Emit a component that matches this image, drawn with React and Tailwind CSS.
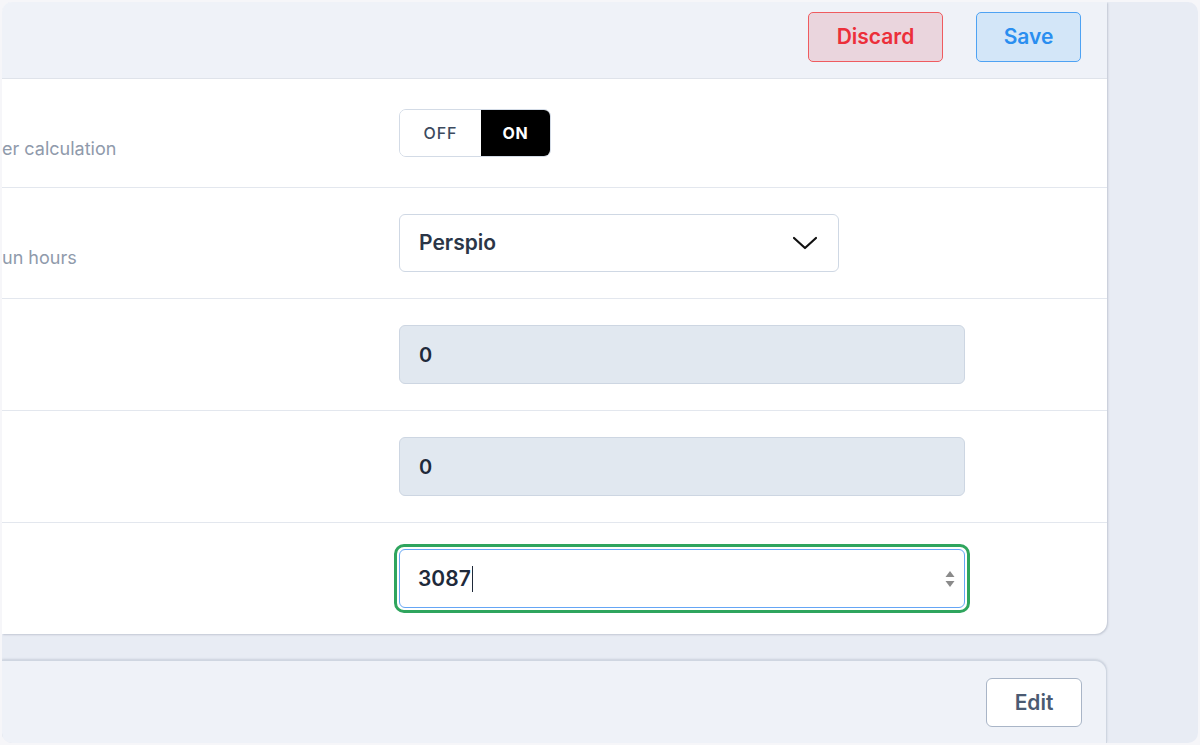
import React from "react";

const font = { fontFamily: "Inter, 'Noto Sans', sans-serif" };

function Row({ children, desc, last, height }) {
  return (
    <div className={`grid grid-cols-[397px_1fr] ${height} ${last ? "" : "border-b border-[#e3e7ee]"}`}>
      <div className="overflow-hidden whitespace-nowrap">
        {desc ? (
          <div className="pt-[58px] text-[18px] leading-6 text-[#8f9aab]">{desc}</div>
        ) : null}
      </div>
      <div className="flex items-center">{children}</div>
    </div>
  );
}

function Toggle() {
  return (
    <div className="flex h-[48px] w-[152px] overflow-hidden rounded-[7px] border border-[#d3dbe6]">
      <div className="flex w-[81px] items-center justify-center bg-white text-[16px] font-medium tracking-[0.06em] text-[#3c4a5e]">
        OFF
      </div>
      <div className="flex flex-1 items-center justify-center bg-black text-[16px] font-bold tracking-[0.04em] text-white">
        ON
      </div>
    </div>
  );
}

function Chevron() {
  return (
    <svg width="26" height="16" viewBox="0 0 26 16" fill="none" stroke="#111" strokeWidth="2.2" strokeLinecap="round" strokeLinejoin="round">
      <path d="M2 3 L13 13 L24 3" />
    </svg>
  );
}

function Spinner() {
  return (
    <svg width="12" height="18" viewBox="0 0 12 18" fill="#8a8a8a">
      <path d="M6 1 L10.5 7 L1.5 7 Z" />
      <path d="M6 17 L10.5 11 L1.5 11 Z" />
    </svg>
  );
}

export default function App() {
  return (
    <div className="h-[745px] w-[1200px] bg-[#f6f6f9] p-[2px]" style={font}>
      <div className="flex h-full w-full overflow-hidden rounded-[10px] bg-[#e8ecf4]">
        {/* main column */}
        <div className="flex w-[1105px] flex-col">
          {/* settings card */}
          <div className="rounded-br-[12px] bg-white shadow-[1px_1px_2px_rgba(120,130,150,0.35)]">
            <div className="flex h-[77px] items-start justify-end gap-[33px] border-b border-[#dfe3ea] bg-[#eff2f8] pr-[26px] pt-[10px]">
              <button className="h-[50px] w-[135px] rounded-[5px] border border-[#ef5b5f] bg-[#ead5dd] text-[21px] font-semibold text-[#ec2f3a]">
                Discard
              </button>
              <button className="h-[50px] w-[105px] rounded-[5px] border border-[#4ea2f3] bg-[#d3e6f8] text-[21px] font-semibold text-[#2a8ef0]">
                Save
              </button>
            </div>

            <Row desc="er calculation" height="h-[109px]">
              <Toggle />
            </Row>
            <Row desc="un hours" height="h-[111px]">
              <div className="flex h-[58px] w-[440px] items-center justify-between rounded-[6px] border border-[#cfd8e4] bg-white pl-[19px] pr-[20px]">
                <span className="text-[21px] font-semibold text-[#2b3647]">Perspio</span>
                <Chevron />
              </div>
            </Row>
            <Row height="h-[112px]">
              <div className="flex h-[59px] w-[566px] items-center rounded-[6px] border border-[#cdd6e2] bg-[#e1e8f0] pl-[19px]">
                <span className="text-[20px] font-semibold text-[#1f2a3a]">0</span>
              </div>
            </Row>
            <Row height="h-[112px]">
              <div className="flex h-[59px] w-[566px] items-center rounded-[6px] border border-[#cdd6e2] bg-[#e1e8f0] pl-[19px]">
                <span className="text-[20px] font-semibold text-[#1f2a3a]">0</span>
              </div>
            </Row>
            <Row last height="h-[111px]">
              <div className="-ml-[5px] rounded-[10px] border-[3px] border-[#2fa55e] p-[2px]">
                <div className="flex h-[59px] w-[566px] items-center justify-between rounded-[6px] border-[1.5px] border-[#65a6f5] bg-white pl-[18px] pr-[8px]">
                  <span className="flex items-center text-[21px] font-semibold text-[#1f2a3a]">
                    3087
                    <span className="ml-[1px] h-[26px] w-[1px] bg-[#1f2a3a]" />
                  </span>
                  <Spinner />
                </div>
              </div>
            </Row>
          </div>

          {/* second card */}
          <div className="mt-[26px] flex flex-1 justify-end rounded-tr-[12px] border-r border-t border-[#cfd6e1] bg-[#eff2f8] pr-[24px] pt-[17px] shadow-[0_-1px_2px_rgba(120,130,150,0.25)]">
            <button className="h-[49px] w-[96px] rounded-[6px] border border-[#a9b5c7] bg-white text-[21px] font-semibold text-[#4a5a72]">
              Edit
            </button>
          </div>
        </div>
        {/* side strip */}
        <div className="flex-1" />
      </div>
    </div>
  );
}
